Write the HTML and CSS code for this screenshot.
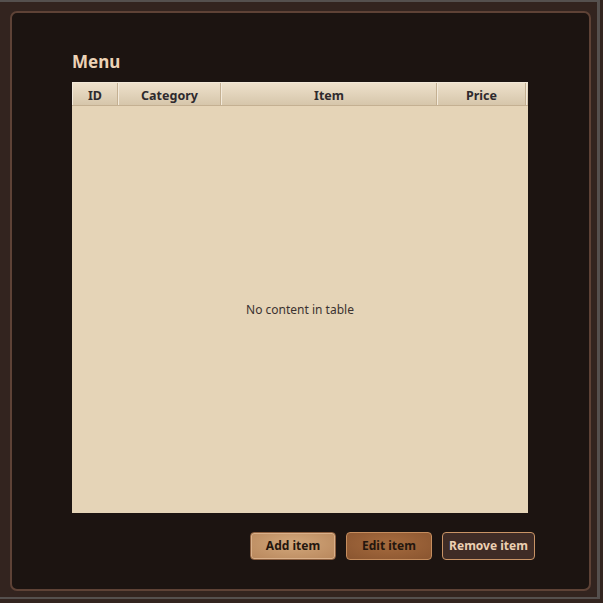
FILE: index.html
```html
<!DOCTYPE html>
<html>
<head>
<meta charset="utf-8">
<link rel="stylesheet" href="styles.css">
</head>
<body>
<div class="window">
  <div class="panel">
    <h1 class="title">Menu</h1>
    <div class="table">
      <div class="thead">
        <div class="th c-id">ID</div>
        <div class="th c-cat">Category</div>
        <div class="th c-item">Item</div>
        <div class="th c-price">Price</div>
        <div class="th c-fill"></div>
      </div>
      <div class="tbody">No content in table</div>
    </div>
    <div class="actions">
      <button class="btn btn-add">Add item</button>
      <button class="btn btn-edit">Edit item</button>
      <button class="btn btn-remove">Remove item</button>
    </div>
  </div>
</div>
</body>
</html>
```
FILE: styles.css
```css
html, body {
  margin: 0;
  padding: 0;
  background: #33241f;
}
.window {
  width: 600px;
  height: 599px;
  border-top: 2px solid #55504e;
  border-right: 3px solid #55504e;
  border-bottom: 2px solid #55504e;
  background: #33241f;
  padding: 9px 9px 0 10px;
  box-sizing: border-box;
  font-family: "Noto Sans", "Open Sans", sans-serif;
}
.panel {
  width: 581px;
  height: 580px;
  box-sizing: border-box;
  border: 2px solid #5e4236;
  border-radius: 7px;
  background: #1c1411;
  padding: 38px 0 0 60px;
  display: flex;
  flex-direction: column;
}
.title {
  margin: 0;
  font-size: 17px;
  line-height: 22px;
  font-weight: 700;
  color: #ecd2b6;
  height: 31px;
}
.table {
  width: 456px;
  height: 431px;
  background: #e5d4b7;
  display: flex;
  flex-direction: column;
}
.thead {
  height: 24px;
  display: flex;
  background: linear-gradient(#eee1cb, #d6c6ab);
  border-top: 1px solid #f2e8d8;
  border-bottom: 1px solid #c4b092;
  box-sizing: border-box;
}
.th {
  box-sizing: border-box;
  border-right: 1px solid #c4b092;
  border-left: 1px solid #f3eadb;
  font-size: 12.5px;
  font-weight: 700;
  color: #2e2a2e;
  text-align: center;
  line-height: 22px;
  padding-top: 2px;
}
.c-id { width: 46px; }
.c-cat { width: 103px; }
.c-item { width: 216px; }
.c-price { width: 89px; }
.c-fill { flex: 1; border-right: none; }
.tbody {
  flex: 1;
  display: flex;
  align-items: center;
  justify-content: center;
  font-size: 12px;
  color: #3b3230;
}
.actions {
  display: flex;
  justify-content: flex-end;
  gap: 10px;
  margin-top: 19px;
  padding-right: 54px;
}
.btn {
  height: 28px;
  box-sizing: border-box;
  border-radius: 4px;
  font-family: "Noto Sans", "Open Sans", sans-serif;
  font-size: 12px;
  font-weight: 700;
  padding: 0;
  line-height: 24px;
}
.btn-add {
  width: 86px;
  background: radial-gradient(ellipse at 50% 40%, #d2a77b, #b8875c);
  border: 1px solid #8c5f3e;
  box-shadow: inset 0 0 0 1px #d9b08a;
  color: #24160e;
}
.btn-edit {
  width: 86px;
  background: radial-gradient(ellipse at 50% 40%, #a66b3e, #8a5530);
  border: 1px solid #c58d5e;
  color: #24160e;
}
.btn-remove {
  width: 93px;
  background: #3f2c26;
  border: 1px solid #c99466;
  color: #ecd0b2;
}
```
